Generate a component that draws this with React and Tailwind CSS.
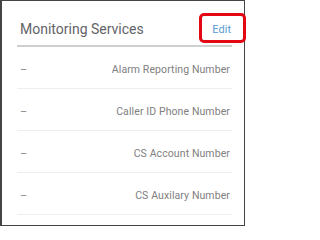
import React from 'react'

const rows = [
    'Alarm Reporting Number',
    'Caller ID Phone Number',
    'CS Account Number',
    'CS Auxilary Number',
]

function App() {
    return (
        <div className="bg-white w-[250px] h-[227px]" style={{ fontFamily: 'Roboto, "Liberation Sans", sans-serif' }}>
            <div className="relative w-[245px] h-[226px] border border-l-2 border-[#444] bg-white">
                <div className="pl-[15px] pr-[12px]">
                    <div className="h-[46px] flex items-center justify-between pt-[12px] pl-[3px] pr-[1px] border-b-2 border-[#cfcfcf]">
                        <span className="text-[14px] leading-[18px] text-[#5f6368]">Monitoring Services</span>
                        <span className="text-[11px] leading-[14px] text-[#5b9bd5] mt-[2px]">Edit</span>
                    </div>

                    {rows.map((label) => (
                        <div key={label} className="h-[42px] flex justify-between pt-[16px] pl-[3px] pr-[2px] border-b border-[#eeeeee]">
                            <span className="text-[11px] leading-[14px] text-[#888]">–</span>
                            <span className="text-[10.5px] leading-[14px] tracking-[0.1px] text-[#808080]">{label}</span>
                        </div>
                    ))}
                </div>

                {/* red annotation round the Edit link */}
                <div className="absolute left-[197px] top-[12px] w-[47px] h-[30px] border-[3px] border-[#e30613] rounded-[5px]"></div>
            </div>
        </div>
    )
}

export default App
